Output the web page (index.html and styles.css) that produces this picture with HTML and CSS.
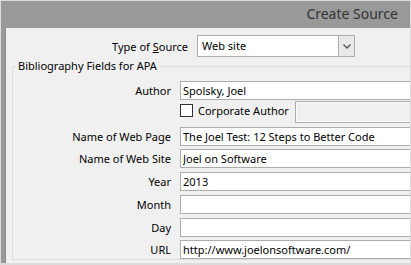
FILE: index.html
```html
<!DOCTYPE html>
<html>
  <head>
    <meta charset="UTF-8">
    <link rel="stylesheet" href="styles.css">
  </head>
  <body>
    <div class="window">
      <div class="titlebar">Create Source</div>
      <div class="frame">
        <main class="dialog">
          <div class="source-row">
            <label class="source-label">Type of <u>S</u>ource</label>
            <div class="combo">
              <span class="combo-value">Web site</span>
              <span class="combo-button">
                <svg width="8" height="5" viewBox="0 0 8 5"><polyline points="0.5,0.5 4,4 7.5,0.5" fill="none" stroke="#555" stroke-width="1.4"/></svg>
              </span>
            </div>
          </div>
          <fieldset class="fields">
            <legend>Bibliography Fields for APA</legend>
            <ul>
              <li>
                <span class="field-label">Author</span>
                <input class="field" value="Spolsky, Joel" />
              </li>
              <li>
                <span class="field-label"></span>
                <span class="corporate">
                  <span class="checkbox"></span>
                  <span class="corporate-text">Corporate Author</span>
                  <input class="field field-disabled" disabled />
                </span>
              </li>
              <li>
                <span class="field-label">Name of Web Page</span>
                <input class="field" value="The Joel Test: 12 Steps to Better Code" />
              </li>
              <li>
                <span class="field-label">Name of Web Site</span>
                <input class="field" value="Joel on Software" />
              </li>
              <li>
                <span class="field-label">Year</span>
                <input class="field" value="2013" />
              </li>
              <li>
                <span class="field-label">Month</span>
                <input class="field" value="" />
              </li>
              <li>
                <span class="field-label">Day</span>
                <input class="field" value="" />
              </li>
              <li>
                <span class="field-label">URL</span>
                <input class="field" value="http://www.joelonsoftware.com/" />
              </li>
            </ul>
          </fieldset>
        </main>
      </div>
    </div>
  </body>
</html>
```

FILE: styles.css
```css
html, body {
  width: 411px;
  height: 265px;
  margin: 0;
  padding: 0;
  overflow: hidden;
  font-family: "Noto Sans", "Open Sans", sans-serif;
  font-size: 11px;
  color: #000;
  background: #dcdcdc;
}
* {
  box-sizing: border-box;
}
.window {
  width: 411px;
  height: 265px;
  border: 1px solid #dcdcdc;
  border-bottom-width: 2px;
  display: flex;
  flex-direction: column;
}
.titlebar {
  height: 27px;
  line-height: 25px;
  padding-right: 12px;
  text-align: right;
  font-size: 14px;
  color: #333;
  background: #999;
  flex: none;
}
.frame {
  flex: 1;
  display: flex;
  padding-left: 4px;
  background: #999;
  overflow: hidden;
}
.dialog {
  flex: 1;
  border-left: 1px solid #8a8a8a;
  background: #f0f0f0;
  padding-top: 7px;
  overflow: hidden;
}
.source-row {
  display: flex;
  align-items: center;
  height: 22px;
}
.source-label {
  width: 182px;
  margin-right: 9px;
  text-align: right;
}
.combo {
  width: 158px;
  height: 22px;
  display: flex;
  border: 1px solid #acacac;
  background: #fff;
}
.combo-value {
  flex: 1;
  line-height: 20px;
  padding-left: 4px;
}
.combo-button {
  width: 17px;
  margin: -1px -1px -1px 0;
  border: 1px solid #acacac;
  background: #e9e9e9;
  display: flex;
  align-items: center;
  justify-content: center;
}
.fields {
  width: 420px;
  margin: 1px 0 0 6px;
  padding: 0 0 0 3px;
  border: 1px solid #dcdcdc;
}
.fields legend {
  padding: 0 2px;
  line-height: 16px;
}
.fields ul {
  margin: 0;
  padding: 7px 0 0;
  display: flex;
  flex-direction: column;
  gap: 3.75px;
}
.fields li {
  list-style: none;
  display: flex;
  align-items: flex-start;
  height: 19px;
}
.field-label {
  width: 155px;
  margin-right: 9px;
  text-align: right;
  line-height: 19px;
  flex: none;
}
.field {
  width: 240px;
  height: 19px;
  margin: 0;
  padding: 0 2px;
  border: 1px solid #acacac;
  background: #fff;
  font: inherit;
  color: #000;
  outline: none;
}
.corporate {
  display: flex;
  align-items: flex-start;
}
.checkbox {
  width: 13px;
  height: 13px;
  margin-top: 0.5px;
  border: 1px solid #333;
  background: #fff;
  flex: none;
}
.corporate-text {
  width: 102px;
  padding-left: 5px;
  line-height: 14px;
  white-space: nowrap;
  flex: none;
}
.field-disabled {
  width: 130px;
  height: 22px;
  margin-top: -3px;
  background: #f0f0f0;
  box-shadow: inset 0 0 0 1px #fbfbfb;
}
```
